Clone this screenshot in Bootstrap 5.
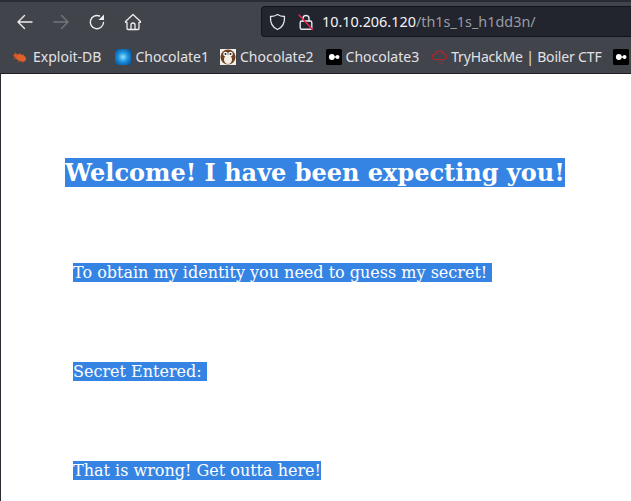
<!DOCTYPE html>
<html lang="en">
<head>
<meta charset="utf-8">
<title>Welcome</title>
<link href="https://cdn.jsdelivr.net/npm/bootstrap@5.3.0/dist/css/bootstrap.min.css" rel="stylesheet">
<style>
html,body{height:100%;overflow:hidden;background:#fff}
body{font-family:"DejaVu Serif",serif;width:631px;height:501px}
.chrome{height:74px;background:#42444c;border-top:2px solid #2a2c33;border-bottom:1px solid #1c1e24;font-family:"Noto Sans",sans-serif;color:#e2e2e5;overflow:hidden}
.toolrow{height:39px;padding-left:16px}
.tbtn{width:18px;height:18px;flex:none;display:block}
.gap-tools{gap:18px}
.urlbar{margin-left:auto;width:370px;height:31px;background:#22242e;border:1px solid #14151a;border-right:0;border-radius:4px 0 0 4px;padding-left:7px;flex:none;font-size:14.4px;white-space:nowrap}
.shieldgap{margin-right:10px}
.urltext{margin-left:7px}
.urlhost{color:#f4f4f6}
.urlpath{color:#9a9ca3}
.bmrow{height:33px;margin-top:-1px;padding-left:12px;font-size:14px;white-space:nowrap}
.bmk{margin-right:11px;flex:none}
.bmk:nth-child(1){margin-right:14px}
.bmk:nth-child(1) .favi{margin-right:5px}
.bmk:nth-child(3){margin-right:12px}
.bmk:nth-child(4){margin-right:12px}
.bmk:nth-child(5){margin-right:11px;letter-spacing:-.012em}
.favi{width:16px;height:16px;flex:none;margin-right:4px;display:block}
.pagearea{height:427px;border-left:1px solid #2a2c33;padding-left:64px;background:#fff}
.hl{background:#3584e4;color:#fff}
.headline{font-size:24px;font-weight:700;line-height:29px;margin:0;padding-top:84px;white-space:nowrap}
.msg{font-size:16px;line-height:19px;margin:0 0 0 8px;padding-top:80px;white-space:pre}
.msg-first{padding-top:76px}
</style>
</head>
<body>
<div class="chrome">
  <div class="toolrow d-flex align-items-center">
    <div class="d-flex align-items-center gap-tools">
      <svg class="tbtn" viewBox="0 0 18 18" fill="none" stroke="#eeeef0" stroke-width="1.4" stroke-linecap="round" stroke-linejoin="round"><path d="M2 9h14M8.500 2.500 2 9l6.500 6.500"/></svg>
      <svg class="tbtn" viewBox="0 0 18 18" fill="none" stroke="#74767c" stroke-width="1.4" stroke-linecap="round" stroke-linejoin="round"><path d="M2 9h14M9.500 2.500 16 9l-6.500 6.500"/></svg>
      <svg class="tbtn" viewBox="0 0 18 18" fill="none" stroke="#eeeef0" stroke-width="1.4" stroke-linecap="round"><path d="M15.500 9.500A6.600 6.600 0 1 1 11.500 3"/><path d="M16 1.500v5.500h-5.500z" fill="#eeeef0" stroke="none"/></svg>
      <svg class="tbtn" viewBox="0 0 18 18" fill="none" stroke="#eeeef0" stroke-width="1.3" stroke-linejoin="round" stroke-linecap="round"><path d="M1.500 8.500 9 1.500l7.500 7v.8H15v6.200a1 1 0 0 1-1 1H4a1 1 0 0 1-1-1V9.300H1.500z"/><path d="M7 16.500v-4.500a2 2 0 0 1 4 0v4.500"/></svg>
    </div>
    <div class="urlbar d-flex align-items-center">
      <svg class="tbtn shieldgap" viewBox="0 0 18 18" fill="none" stroke="#e4e4e8" stroke-width="1.3" stroke-linejoin="round"><path d="M8.500 1.500c2 1.400 4.500 2 7 2 .4 6-1.500 10.700-7 13-5.500-2.300-7.400-7-7-13 2.500 0 5-.6 7-2z"/></svg>
      <svg class="tbtn" viewBox="0 0 18 18" fill="none" stroke-linecap="round"><path d="M6 8V5.500a3 3 0 0 1 6 0V8" stroke="#e8e8ec" stroke-width="1.4"/><rect x="3.200" y="8" width="11.600" height="8.300" rx="1.500" stroke="#e8e8ec" stroke-width="1.400"/><path d="M2 2 15.500 16.500" stroke="#e22850" stroke-width="1.500"/></svg>
      <span class="urltext"><span class="urlhost">10.10.206.120</span><span class="urlpath">/th1s_1s_h1dd3n/</span></span>
    </div>
  </div>
  <div class="bmrow d-flex align-items-center">
    <div class="bmk d-flex align-items-center">
      <svg class="favi" viewBox="0 0 16 16"><ellipse cx="9" cy="8.500" rx="5.500" ry="3.500" fill="#e0602a" transform="rotate(20 8 8)"/><circle cx="3.500" cy="6.500" r="2" fill="#d8582a"/><path d="M3 3 5 6M8 4l.5 2M12 5l-1 2M1.500 10l3-1M6 13.500l1-2M11 14v-2" stroke="#b5562f" stroke-width=".8"/></svg>Exploit-DB
    </div>
    <div class="bmk d-flex align-items-center">
      <svg class="favi" viewBox="0 0 16 16"><defs><radialGradient id="bluegl" r=".75"><stop offset="0" stop-color="#8fe4fa"/><stop offset=".4" stop-color="#1c93e2"/><stop offset="1" stop-color="#08386f"/></radialGradient></defs><rect width="16" height="16" fill="url(#bluegl)"/></svg>Chocolate1
    </div>
    <div class="bmk d-flex align-items-center">
      <svg class="favi" viewBox="0 0 16 16"><rect width="16" height="16" fill="#f2efe8"/><circle cx="8" cy="8" r="7.500" fill="#6d3f22"/><ellipse cx="8" cy="10.500" rx="4" ry="4.500" fill="#f4f0e6"/><circle cx="5.500" cy="5" r="2.300" fill="#fff"/><circle cx="10.500" cy="5" r="2.300" fill="#fff"/><circle cx="5.500" cy="5" r="1" fill="#222"/><circle cx="10.500" cy="5" r="1" fill="#222"/></svg>Chocolate2
    </div>
    <div class="bmk d-flex align-items-center">
      <svg class="favi" viewBox="0 0 16 16"><rect width="16" height="16" rx="1.500" fill="#000"/><circle cx="5.800" cy="8" r="2.900" fill="#fff"/><circle cx="11.500" cy="8" r="2" fill="#fff"/><rect x="6" y="7.400" width="4" height="1.200" fill="#fff"/></svg>Chocolate3
    </div>
    <div class="bmk d-flex align-items-center">
      <svg class="favi" viewBox="0 0 16 16" fill="none" stroke="#b3252c" stroke-width="1.100"><path d="M3.500 10.500a2.500 2.500 0 0 1 0-5c.5 0 1 .1 1 .1A4 4 0 0 1 12.300 5a2.800 2.800 0 0 1 1 5.500z"/><path d="M6 12.500h7M8 14.500h5" stroke="#6e3a40"/></svg>TryHackMe | Boiler CTF
    </div>
    <svg class="favi" viewBox="0 0 16 16"><rect width="16" height="16" rx="1.500" fill="#000"/><circle cx="5.800" cy="8" r="2.900" fill="#fff"/><circle cx="11.500" cy="8" r="2" fill="#fff"/><rect x="6" y="7.400" width="4" height="1.200" fill="#fff"/></svg>
  </div>
</div>
<main class="pagearea">
  <h2 class="headline"><span class="hl">Welcome! I have been expecting you!</span></h2>
  <p class="msg msg-first"><span class="hl">To obtain my identity you need to guess my secret! </span></p>
  <p class="msg"><span class="hl">Secret Entered: </span></p>
  <p class="msg"><span class="hl">That is wrong! Get outta here!</span></p>
</main>
<script src="https://cdn.jsdelivr.net/npm/bootstrap@5.3.0/dist/js/bootstrap.bundle.min.js"></script>
</body>
</html>
